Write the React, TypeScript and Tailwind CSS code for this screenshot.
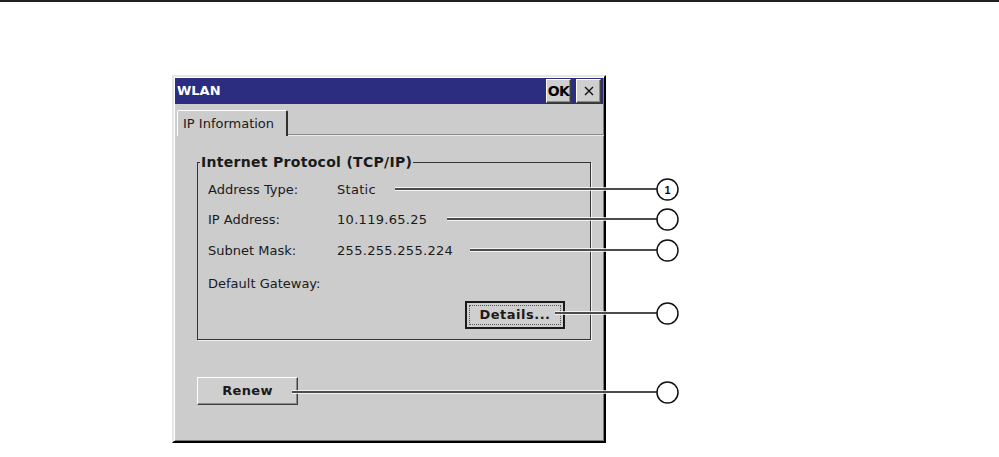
const font = "font-['DejaVu_Sans',sans-serif]";

function RaisedButton({
  children,
  className,
}: {
  children: React.ReactNode;
  className: string;
}) {
  return (
    <div
      className={`flex items-center justify-center border border-t-white border-l-white border-r-[#404040] border-b-[#404040] bg-[#cfcfcf] shadow-[inset_-1px_-1px_0_#8a8a8a] ${className}`}
    >
      {children}
    </div>
  );
}

function InfoRow({
  label,
  value,
  height,
}: {
  label: string;
  value?: string;
  height: string;
}) {
  return (
    <div className={`flex items-center ${height}`}>
      <span className="w-[139px] shrink-0 pl-[10px]">{label}</span>
      {value && <span className="tracking-[0.3px]">{value}</span>}
    </div>
  );
}

function Callouts() {
  const items = [
    { x: 395, y: 189, n: "1" },
    { x: 447, y: 219, n: "" },
    { x: 470, y: 250, n: "" },
    { x: 555, y: 313, n: "" },
    { x: 292, y: 392, n: "" },
  ];
  return (
    <svg
      className="pointer-events-none absolute left-0 top-0"
      width={999}
      height={457}
    >
      {items.map((it) => (
        <g key={it.y}>
          <line x1={it.x} y1={it.y} x2={657} y2={it.y} stroke="#fff" strokeWidth={3.5} />
          <line x1={it.x} y1={it.y} x2={657} y2={it.y} stroke="#111" strokeWidth={1.5} />
          <circle cx={667.5} cy={it.y + 0.5} r={10.5} fill="#fff" stroke="#111" strokeWidth={1.5} />
          {it.n && (
            <text
              x={667.5}
              y={it.y + 4.5}
              textAnchor="middle"
              fontSize={11}
              fontWeight={700}
              fontFamily="Liberation Sans, Arial, sans-serif"
              fill="#111"
            >
              {it.n}
            </text>
          )}
        </g>
      ))}
    </svg>
  );
}

export default function App() {
  return (
    <div className={`relative h-[457px] w-[999px] overflow-hidden bg-white ${font} text-[13px] text-[#1a1a1a]`}>
      <div className="h-[2px] w-full bg-[#231f20]" />

      <div className="ml-[172px] mt-[73px] flex h-[368px] w-[434px] flex-col border-2 border-t-[#e6e6e6] border-l-[#e6e6e6] border-r-black border-b-black bg-[#cccccc] shadow-[inset_1px_1px_0_#fff,inset_-1px_-1px_0_#7a7a7a]">
        {/* title bar */}
        <div className="mx-[1px] mt-[1px] flex h-[26px] items-center justify-between bg-[#2c2c80] pl-[2px] pr-[2px]">
          <span className="text-[13px] font-bold text-white">WLAN</span>
          <div className="flex gap-[5px]">
            <RaisedButton className="h-[24px] w-[25px] text-[14px] font-bold tracking-[-0.5px] text-black">
              OK
            </RaisedButton>
            <RaisedButton className="h-[24px] w-[25px]">
              <svg width="10" height="10" viewBox="0 0 10 10">
                <path d="M1 1L9 9M9 1L1 9" stroke="#111" strokeWidth="1.4" />
              </svg>
            </RaisedButton>
          </div>
        </div>

        {/* tab strip */}
        <div className="mt-[6px] flex h-[26px] items-end">
          <div className="ml-[3px] flex h-[26px] w-[111px] items-center rounded-t-[2px] border-l border-t border-r-2 border-l-white border-t-white border-r-[#303030] pl-[5px]">
            IP Information
          </div>
          <div className="h-[2px] flex-1 border-t border-t-[#888888] bg-white/60" />
        </div>

        {/* group box */}
        <fieldset className="ml-[23px] mt-[18px] h-[186px] w-[394px] border border-[#333333] shadow-[1px_1px_0_#f2f2f2]">
          <legend className="ml-[2px] px-[1px] text-[14px] font-bold leading-[16px] tracking-[0.3px]">
            Internet Protocol (TCP/IP)
          </legend>
          <div className="flex flex-col pt-[5px]">
            <InfoRow label="Address Type:" value="Static" height="h-[30px]" />
            <InfoRow label="IP Address:" value="10.119.65.25" height="h-[30px]" />
            <InfoRow label="Subnet Mask:" value="255.255.255.224" height="h-[32px]" />
            <InfoRow label="Default Gateway:" height="h-[33px]" />
            <div className="mt-[1px] flex justify-end pr-[25px]">
              <div className="flex h-[28px] w-[100px] items-center justify-center border-2 border-[#1a1a1a] bg-[#cfcfcf] p-[2px]">
                <div className="flex h-full w-full items-center justify-center border border-dotted border-[#555] text-[13px] font-bold tracking-[0.5px]">
                  Details...
                </div>
              </div>
            </div>
          </div>
        </fieldset>

        <div className="ml-[23px] mt-[37px]">
          <RaisedButton className="h-[28px] w-[101px] text-[13px] font-bold tracking-[0.3px]">
            Renew
          </RaisedButton>
        </div>
      </div>

      <Callouts />
    </div>
  );
}
